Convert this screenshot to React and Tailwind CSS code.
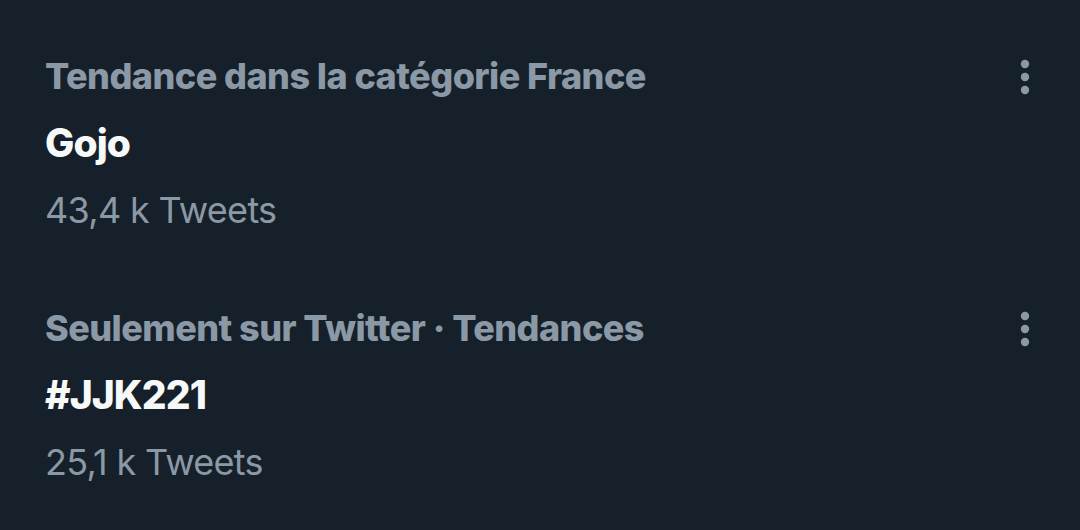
import React from 'react';

const trends = [
  { label: 'Tendance dans la catégorie France', title: 'Gojo', count: '43,4 k Tweets' },
  { label: 'Seulement sur Twitter · Tendances', title: '#JJK221', count: '25,1 k Tweets' },
];

const MoreIcon = () => (
  <svg width="10" height="36" viewBox="0 0 10 36" className="fill-[#8b98a5]">
    <circle cx="5" cy="5" r="4.2" />
    <circle cx="5" cy="18" r="4.2" />
    <circle cx="5" cy="31" r="4.2" />
  </svg>
);

const TrendItem = ({ label, title, count }) => (
  <div className="flex items-start justify-between pl-[45px] pr-[50px] h-[252px]">
    <div className="flex flex-col">
      <div className="text-[36px] leading-[44px] font-extrabold text-[#8b98a5] tracking-[-0.55px]">{label}</div>
      <div className="text-[39px] leading-[90px] font-extrabold text-[#f7f9f9] tracking-[-0.9px]">{title}</div>
      <div className="text-[36px] leading-[45px] text-[#8b98a5] tracking-[-0.7px]">{count}</div>
    </div>
    <div className="pt-[5px]">
      <MoreIcon />
    </div>
  </div>
);

export default function App() {
  return (
    <div
      className="w-[1080px] h-[530px] bg-[#16202a] pt-[54px] overflow-hidden"
      style={{ fontFamily: 'Inter, "Noto Sans", sans-serif' }}
    >
      {trends.map((t) => (
        <TrendItem key={t.title} {...t} />
      ))}
    </div>
  );
}
